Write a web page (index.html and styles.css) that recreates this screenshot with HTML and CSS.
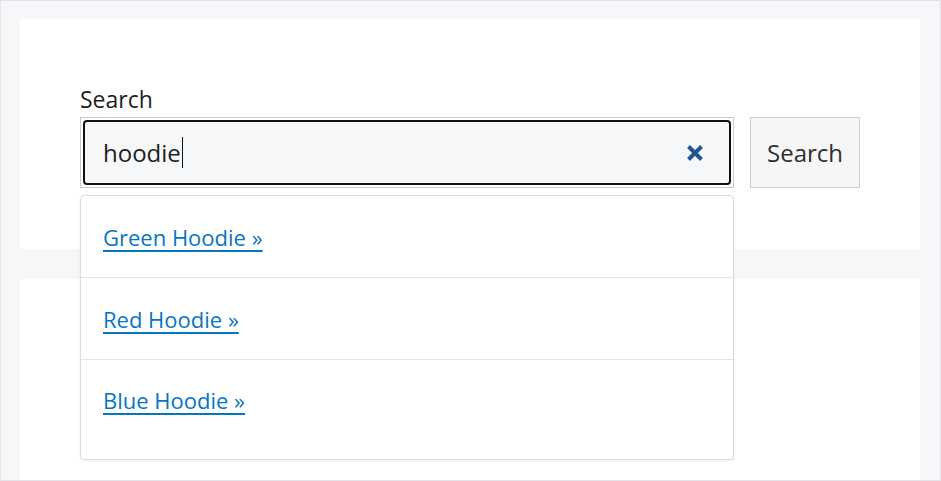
FILE: index.html
```html
<!DOCTYPE html>
<html lang="en">
<head>
    <meta charset="UTF-8">
    <meta name="viewport" content="width=device-width, initial-scale=1.0">
    <title>Search</title>
    <link rel="stylesheet" href="styles.css">
</head>
<body>
    <div class="page">
        <div class="panel">
            <form class="search-form">
                <label class="search-label" for="q">Search</label>
                <div class="search-row">
                    <div class="search-field">
                        <div class="search-input">
                            <span class="typed">hoodie</span><span class="caret"></span>
                            <button type="button" class="clear" aria-label="Clear">
                                <svg width="18" height="18" viewBox="0 0 18 18">
                                    <path d="M2.5 2.5 L15.5 15.5 M15.5 2.5 L2.5 15.5" stroke="#1d5796" stroke-width="4" stroke-linecap="butt" fill="none"/>
                                </svg>
                            </button>
                        </div>

                        <!-- live results -->
                        <ul class="results">
                            <li><a href="#">Green Hoodie &raquo;</a></li>
                            <li><a href="#">Red Hoodie &raquo;</a></li>
                            <li><a href="#">Blue Hoodie &raquo;</a></li>
                        </ul>
                    </div>
                    <button type="button" class="search-button">Search</button>
                </div>
            </form>
        </div>
        <div class="panel panel-lower"></div>
    </div>
</body>
</html>
```

FILE: styles.css
```css
* {
    box-sizing: border-box;
}

body {
    margin: 0;
    height: 100vh;
    overflow: hidden;
    font-family: 'Open Sans', 'Noto Sans', sans-serif;
    color: #1e1e1e;
    background-color: #f6f7f9;
    border: 1px solid #e3e4e7;
}

.page {
    padding: 18px 20px 0 19px;
}

.panel {
    background: #fff;
    height: 230px;
    padding: 65px 60px 0;
}

.panel-lower {
    margin-top: 30px;
    height: 220px;
}

.search-label {
    display: block;
    font-size: 23px;
    line-height: 30px;
    margin-bottom: 3px;
}

.search-row {
    display: flex;
    gap: 16px;
}

.search-field {
    position: relative;
    width: 654px;
    height: 71px;
    border: 1px solid #c9cacd;
    padding: 2px;
}

.search-input {
    height: 100%;
    display: flex;
    align-items: center;
    background: #f6f7f9;
    border: 2px solid #111;
    border-radius: 4px;
    padding: 0 25px 0 18px;
    font-size: 24px;
}

.typed {
    line-height: 1;
}

.caret {
    display: inline-block;
    width: 1px;
    height: 31px;
    margin-left: 1px;
    background: #111;
}

.clear {
    margin-left: auto;
    border: none;
    background: none;
    padding: 0;
    width: 18px;
    height: 18px;
    display: flex;
    cursor: pointer;
}

.search-button {
    width: 110px;
    height: 71px;
    background: #f6f6f6;
    border: 1px solid #cccccc;
    font-family: inherit;
    font-size: 24px;
    color: #2f2f2f;
    padding: 0;
    cursor: pointer;
}

.results {
    position: absolute;
    top: 77px;
    left: -1px;
    width: 654px;
    margin: 0;
    padding: 0 0 19px;
    list-style: none;
    background: #fff;
    border: 1px solid #dcdcde;
    border-radius: 4px;
    box-shadow: 0 1px 3px rgba(0, 0, 0, 0.08);
    z-index: 2;
}

.results li {
    height: 82px;
    display: flex;
    align-items: center;
    padding-left: 22px;
    border-bottom: 1px solid #e2e2e4;
}

.results li:last-child {
    height: 80px;
    border-bottom: none;
}

.results a {
    font-size: 22px;
    color: #0675c4;
    text-decoration: underline;
    text-decoration-thickness: 1.5px;
    text-underline-offset: 4px;
}
```
